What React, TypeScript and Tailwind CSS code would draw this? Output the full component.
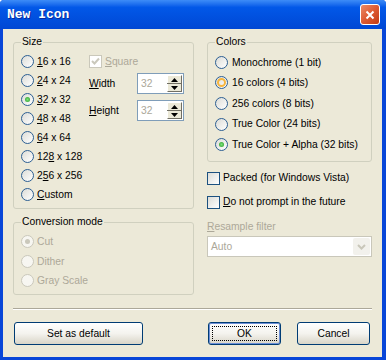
import React from "react";

type RadioProps = { checked?: boolean; disabled?: boolean; hover?: boolean };

function RadioDot({ checked, disabled, hover }: RadioProps) {
  return (
    <span
      className={
        disabled
          ? "flex h-[13px] w-[13px] shrink-0 items-center justify-center rounded-full border border-[#CAC8BB] bg-[#F7F6F1]"
          : "flex h-[13px] w-[13px] shrink-0 items-center justify-center rounded-full border border-[#2C5F93] bg-linear-to-br from-[#DCDCD7] to-white"
      }
    >
      {hover && <span className="h-[9px] w-[9px] rounded-full border-2 border-[#F6B53E]" />}
      {checked && (
        <span
          className={
            disabled
              ? "h-[5px] w-[5px] rounded-full bg-[#CAC8BB]"
              : "h-[5px] w-[5px] rounded-full bg-radial from-[#7BE27B] to-[#1E9A1E]"
          }
        />
      )}
    </span>
  );
}

function Check({ checked, disabled }: { checked?: boolean; disabled?: boolean }) {
  return (
    <span
      className={
        disabled
          ? "flex h-[13px] w-[13px] shrink-0 items-center justify-center border border-[#CAC8BB] bg-white"
          : "flex h-[13px] w-[13px] shrink-0 items-center justify-center border border-[#1C5180] bg-linear-to-br from-[#DCDCD7] to-white"
      }
    >
      {checked && (
        <svg width="9" height="9" viewBox="0 0 9 9">
          <polyline
            points="1,4 3.5,6.5 8,1.5"
            fill="none"
            stroke={disabled ? "#CAC8BB" : "#21A121"}
            strokeWidth="2"
          />
        </svg>
      )}
    </span>
  );
}

function Spin() {
  return (
    <div className="flex h-[21px] w-[47px] items-center border border-[#7F9DB9] bg-white pl-[3px] pr-[1px]">
      <span className="flex-1 text-[#ACA899]">32</span>
      <div className="flex h-[17px] w-[15px] flex-col">
        <div className="flex flex-1 items-center justify-center border border-b-0 border-t-white border-l-white border-r-[#716F64] bg-[#ECE9D8]">
          <svg width="7" height="4" viewBox="0 0 7 4">
            <polygon points="3.5,0 7,4 0,4" fill="#000" />
          </svg>
        </div>
        <div className="h-px bg-[#716F64]" />
        <div className="flex flex-1 items-center justify-center border border-t-0 border-l-white border-r-[#716F64] border-b-[#716F64] bg-[#ECE9D8]">
          <svg width="7" height="4" viewBox="0 0 7 4">
            <polygon points="0,0 7,0 3.5,4" fill="#000" />
          </svg>
        </div>
      </div>
    </div>
  );
}

function U({ children }: { children: React.ReactNode }) {
  return <span className="underline underline-offset-[1px]">{children}</span>;
}

function Button({ children, focused, width }: { children: React.ReactNode; focused?: boolean; width: string }) {
  return (
    <button
      className={
        (focused
          ? "flex h-[23px] items-center justify-center rounded-[3px] border border-[#003C74] bg-linear-to-b from-white via-[#F4F3EE] to-[#D9D5C8] p-[3px] shadow-[inset_0_0_0_1px_#6D8FD6] "
          : "flex h-[23px] items-center justify-center rounded-[3px] border border-[#003C74] bg-linear-to-b from-white via-[#F4F3EE] to-[#D9D5C8] ") +
        width
      }
    >
      {focused ? (
        <span className="flex h-full w-full items-center justify-center border border-dotted border-black">
          {children}
        </span>
      ) : (
        children
      )}
    </button>
  );
}

const sizes: [React.ReactNode, boolean][] = [
  [<><U>1</U>6 x 16</>, false],
  [<><U>2</U>4 x 24</>, false],
  [<><U>3</U>2 x 32</>, true],
  [<><U>4</U>8 x 48</>, false],
  [<><U>6</U>4 x 64</>, false],
  [<>12<U>8</U> x 128</>, false],
  [<>2<U>5</U>6 x 256</>, false],
  [<><U>C</U>ustom</>, false],
];

const colors = [
  "Monochrome (1 bit)",
  "16 colors (4 bits)",
  "256 colors (8 bits)",
  "True Color (24 bits)",
  "True Color + Alpha (32 bits)",
];

export default function App() {
  return (
    <div className="flex h-[360px] w-[386px] flex-col overflow-hidden rounded-t-[4px] bg-[#0846D8] font-['Liberation_Sans',Arial,sans-serif] text-[10.3px] text-black">
      {/* title bar */}
      <div className="flex h-[29px] items-center justify-between bg-linear-to-b from-[#3D8CF7] via-[#0258E8] via-25% to-[#0047D4] pl-[7px] pr-[6px]">
        <span className="font-['Liberation_Mono',monospace] text-[13px] font-bold text-white [text-shadow:1px_1px_#0A2A9C]">
          New Icon
        </span>
        <div className="flex h-[21px] w-[20px] items-center justify-center rounded-[3px] border border-white bg-linear-to-br from-[#EA8A66] via-[#DD5A32] to-[#C3390F]">
          <svg width="10" height="10" viewBox="0 0 10 10">
            <path d="M1.5 1.5 L8.5 8.5 M8.5 1.5 L1.5 8.5" stroke="#fff" strokeWidth="2" />
          </svg>
        </div>
      </div>

      {/* client */}
      <div className="mx-[3px] mb-[3px] mr-[4px] flex flex-1 flex-col bg-[#ECE9D8]">
        <div className="flex gap-[13px] pl-[10px] pt-[7px]">
          <div className="flex w-[181px] flex-col gap-[7px]">
            <fieldset className="h-[173px] rounded-[3px] border border-[#D0D0BF]">
              <legend className="ml-[7px] px-[1px] leading-[12px]">Size</legend>
              <div className="flex pl-[7px] pt-[4px]">
                <div className="flex w-[68px] flex-col">
                  {sizes.map(([label, on], i) => (
                    <div key={i} className="flex h-[19px] items-center gap-[3px]">
                      <RadioDot checked={on} />
                      <span>{label}</span>
                    </div>
                  ))}
                </div>
                <div className="flex flex-col">
                  <div className="flex h-[19px] items-center gap-[3px] text-[#ACA899]">
                    <Check checked disabled />
                    <span>
                      <U>S</U>quare
                    </span>
                  </div>
                  <div className="mt-[2px] flex h-[21px] items-center">
                    <span className="w-[48px]">
                      <U>W</U>idth
                    </span>
                    <Spin />
                  </div>
                  <div className="mt-[6px] flex h-[21px] items-center">
                    <span className="w-[48px]">
                      <U>H</U>eight
                    </span>
                    <Spin />
                  </div>
                </div>
              </div>
            </fieldset>

            <fieldset className="h-[79px] rounded-[3px] border border-[#D0D0BF]">
              <legend className="ml-[7px] px-[1px] leading-[12px]">Conversion mode</legend>
              <div className="flex flex-col pl-[7px] pt-[4px] text-[#ACA899]">
                {["Cut", "Dither", "Gray Scale"].map((l, i) => (
                  <div key={l} className="flex h-[19.5px] items-center gap-[3px]">
                    <RadioDot disabled checked={i === 0} />
                    <span>{l}</span>
                  </div>
                ))}
              </div>
            </fieldset>
          </div>

          <div className="flex w-[165px] flex-col">
            <fieldset className="h-[126px] rounded-[3px] border border-[#D0D0BF]">
              <legend className="ml-[7px] px-[1px] leading-[12px]">Colors</legend>
              <div className="flex flex-col pl-[7px] pt-[4px]">
                {colors.map((l, i) => (
                  <div key={l} className="flex h-[20.6px] items-center gap-[4px]">
                    <RadioDot checked={i === 4} hover={i === 1} />
                    <span>{l}</span>
                  </div>
                ))}
              </div>
            </fieldset>

            <div className="mt-[4px] flex h-[24px] items-center gap-[3px]">
              <Check />
              <span>Packed (for Windows Vista)</span>
            </div>
            <div className="flex h-[24px] items-center gap-[3px]">
              <Check />
              <span>
                <U>D</U>o not prompt in the future
              </span>
            </div>
            <div className="mt-[7px] leading-[12px] text-[#ACA899]">
              <U>R</U>esample filter
            </div>
            <div className="mt-[3px] flex h-[21px] items-center border border-[#C9C7BA] bg-white pl-[3px] pr-[1px] text-[#ACA899]">
              <span className="flex-1">Auto</span>
              <div className="flex h-[17px] w-[17px] items-center justify-center rounded-[2px] bg-[#F2F1EC]">
                <svg width="9" height="6" viewBox="0 0 9 6">
                  <polyline points="1,1 4.5,4.5 8,1" fill="none" stroke="#C9C7BA" strokeWidth="2" />
                </svg>
              </div>
            </div>
          </div>
        </div>

        <div className="mx-[10px] mt-[13px] border-t border-b border-t-[#ACA899] border-b-white" />

        <div className="mt-[12px] flex items-center justify-between pl-[11px] pr-[12px]">
          <Button width="w-[129px]">Set as default</Button>
          <div className="flex gap-[16px]">
            <Button focused width="w-[73px]">
              OK
            </Button>
            <Button width="w-[73px]">Cancel</Button>
          </div>
        </div>
      </div>
    </div>
  );
}
